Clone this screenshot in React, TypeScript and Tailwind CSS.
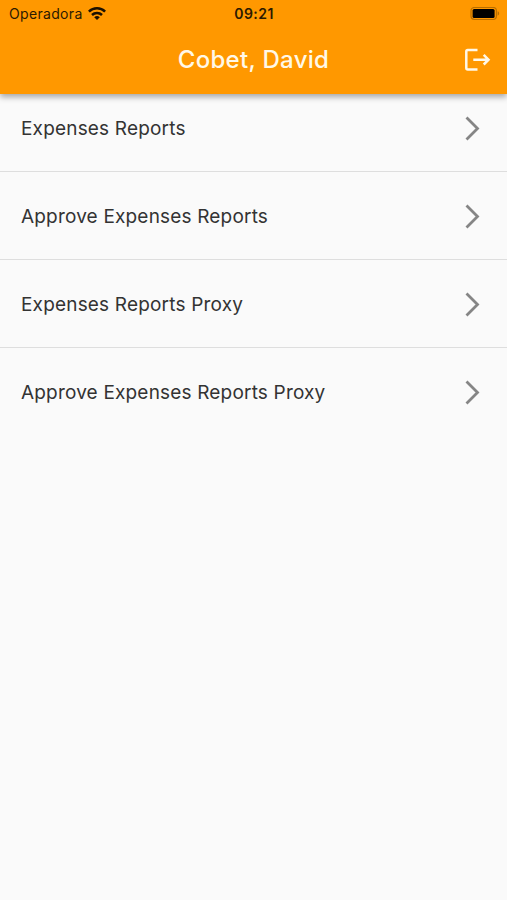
const menuItems = [
  "Expenses Reports",
  "Approve Expenses Reports",
  "Expenses Reports Proxy",
  "Approve Expenses Reports Proxy",
];

export default function App() {
  return (
    <div className="flex h-[900px] flex-col overflow-hidden bg-[#fafafa] font-['Inter','Liberation_Sans',sans-serif]">
      <header className="relative z-10 h-[94px] shrink-0 bg-[#ff9800] shadow-[0_3px_6px_rgba(0,0,0,0.34)]">
        <StatusBar />
        <div className="grid h-[64px] grid-cols-[64px_1fr_64px] items-center">
          <h1 className="col-start-2 text-center text-[24px] leading-8 font-medium tracking-[0.3px] text-[#fff8e8]">
            Cobet, David
          </h1>
          <button aria-label="Log out" className="justify-self-end pr-4">
            <LogoutIcon />
          </button>
        </div>
      </header>

      <ul className="-mt-[10px]">
        {menuItems.map((label) => (
          <MenuRow key={label} label={label} />
        ))}
      </ul>
    </div>
  );
}

function StatusBar() {
  return (
    <div className="grid h-[28px] grid-cols-3 items-center pr-[7px] pl-[9px] text-[#2b1a00]">
      <div className="flex items-center gap-[5px]">
        <span className="text-[14px] leading-5 tracking-[0.33px]">Operadora</span>
        <WifiIcon />
      </div>
      <span className="pr-px text-center text-[14px] leading-5 font-semibold tracking-[0.45px]">09:21</span>
      <div className="justify-self-end">
        <BatteryIcon />
      </div>
    </div>
  );
}

function MenuRow({ label }: { label: string }) {
  return (
    <li className="flex h-[88px] items-center justify-between border-b border-[#dedede] pt-px pr-[27px] pl-[21px] last:border-b-0 last:pb-px">
      <span className="pt-px text-[19px] leading-7 tracking-[0.18px] text-[#333333]">{label}</span>
      <svg width="15" height="25" viewBox="0 0 15 25" fill="none" stroke="#858585" strokeWidth="2.8">
        <path d="M1.5 1.5 12.5 12.5 1.5 23.5" />
      </svg>
    </li>
  );
}

function WifiIcon() {
  return (
    <svg width="18" height="14" viewBox="0 0 18 14" fill="none" stroke="#1c1100" strokeWidth="2.5">
      <path d="M.9 4.700a11.500 11.500 0 0 1 16.200 0" />
      <path d="M4 8a7.100 7.100 0 0 1 10 0" />
      <path d="M9 13.100 6.200 10.300a4 4 0 0 1 5.600 0Z" fill="#1c1100" stroke="none" />
    </svg>
  );
}

function BatteryIcon() {
  return (
    <svg width="30" height="14" viewBox="0 0 30 14">
      <rect x="1" y=".5" width="25.4" height="12" rx="3.4" fill="none" stroke="#b86e00" strokeWidth="1.2" />
      <rect x="2.6" y="2" width="22" height="9" rx="1.6" fill="#000000" />
      <path d="M27.600 4.300c2 .5 2 3.900 0 4.400Z" fill="#b86e00" />
    </svg>
  );
}

function LogoutIcon() {
  return (
    <svg width="27" height="24" viewBox="0 0 27 24" fill="none" stroke="#fff8e8" strokeWidth="2.5">
      <path d="M13.500 2H3.800Q2.300 2 2.300 3.500v16.500q0 1.500 1.500 1.500H13.500" strokeLinejoin="round" />
      <path d="M9.300 11.700h15.200M19.700 6.900l4.800 4.800-4.800 4.800" />
    </svg>
  );
}
